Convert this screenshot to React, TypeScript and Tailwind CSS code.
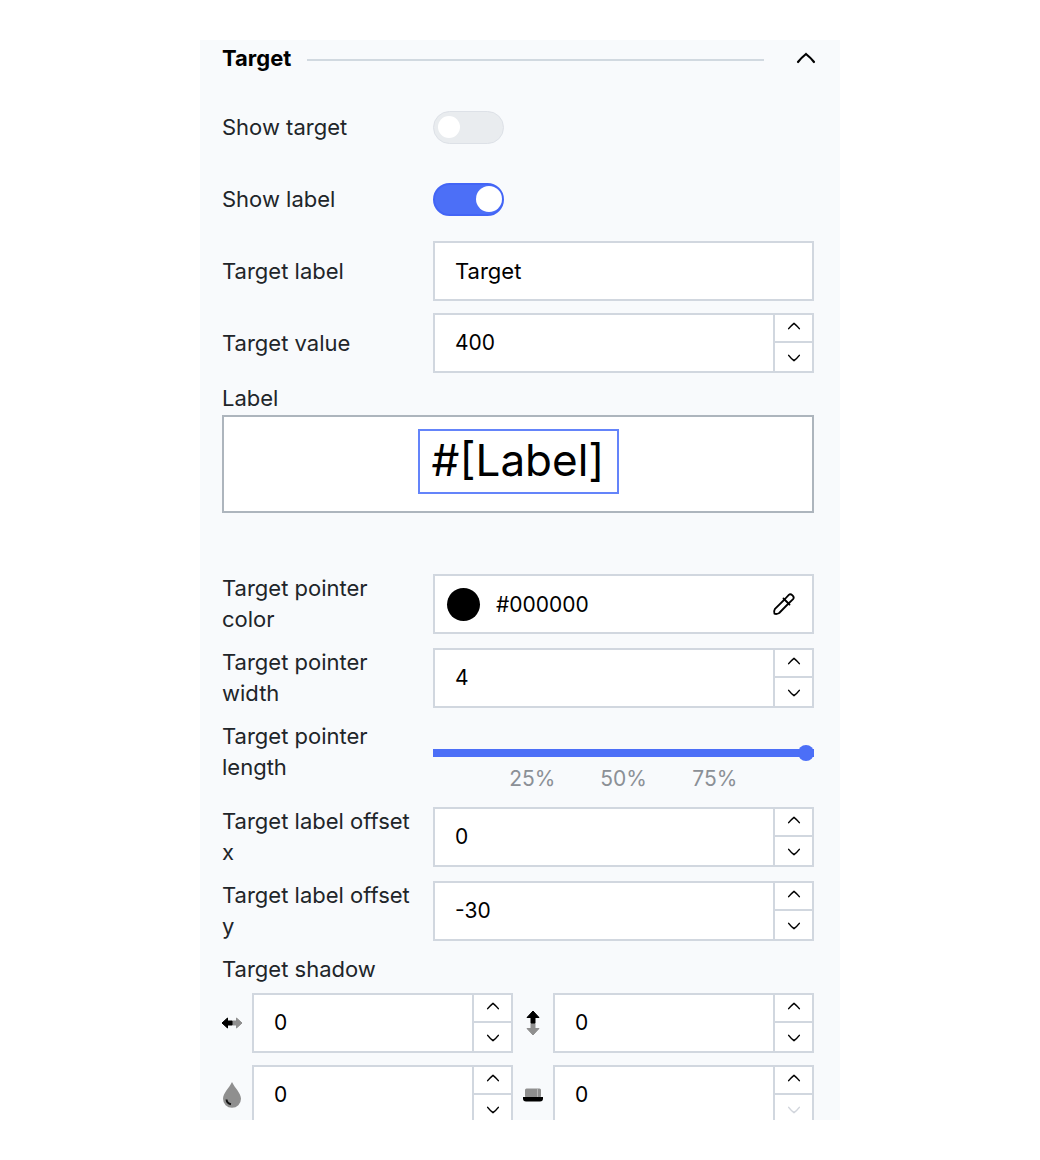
import React, { useId, useState } from 'react';

const ChevronIcon: React.FC<{ className: string; down?: boolean }> = ({ className, down }) => (
  <svg viewBox="0 0 20 12" fill="none" stroke="currentColor" strokeWidth="2.2" strokeLinecap="round" className={className} aria-hidden="true">
    <path d={down ? 'M2 2c2 2.6 5 5.6 8 8 3-2.4 6-5.4 8-8' : 'M2 10c2-2.6 5-5.6 8-8 3 2.4 6 5.4 8 8'} />
  </svg>
);

const OffsetXIcon = () => (
  <svg viewBox="0 0 22 12" strokeLinejoin="round" className="w-[22px] h-3 shrink-0" aria-hidden="true">
    <path d="M21 6l-5.500-5V4H11v4h4.500v3z" fill="#8f8f8f" stroke="#8f8f8f" />
    <path d="M1 6l5.500-5V4H11v4H6.500v3z" fill="#000" stroke="#000" />
  </svg>
);

const OffsetYIcon = () => (
  <svg viewBox="0 0 14 26" strokeLinejoin="round" className="w-3.5 h-[26px]" aria-hidden="true">
    <path d="M7 25l-6-6.500H5V13h4v5.500h4z" fill="#8f8f8f" stroke="#8f8f8f" />
    <path d="M7 1L1 7.500H5V13h4V7.500h4z" fill="#000" stroke="#000" />
  </svg>
);

const BlurIcon = () => (
  <svg viewBox="0 0 20 26" className="w-5 h-[26px]" aria-hidden="true">
    <path d="M10 0C7.500 5.500 1 11 1 16.800a9 9 0 0 0 18 0C19 11 12.500 5.500 10 0z" fill="#8f8f8f" />
    <path d="M4.500 17.500c.3 2.600 1.800 4.200 4.500 4.700" fill="none" stroke="#111" strokeWidth="2" />
  </svg>
);

const SpreadIcon = () => (
  <svg viewBox="0 0 20 14" className="w-5 h-3.5" aria-hidden="true">
    <rect x="2" y="0.5" width="16" height="9" rx="1.5" fill="#8f8f8f" />
    <path d="M14.500 1v8" stroke="#b5b5b5" />
    <path d="M0 9h20v1.500a3 3 0 0 1-3 3H3a3 3 0 0 1-3-3z" fill="#000" />
  </svg>
);

const PickerIcon = () => (
  <svg viewBox="0 0 24 24" fill="none" stroke="currentColor" strokeWidth="1.8" strokeLinejoin="round" strokeLinecap="round" className="w-6 h-6" aria-hidden="true">
    <path d="M12.500 7.500 3 16.800c-1 1.700-1.300 3.400-.6 4.800 1.400.7 3.100.4 4.800-.6l9.300-9.500" />
    <path d="m12.500 7.500 4.300-4.600c2.100-2 6.300 2.100 4.300 4.200l-4.600 4.400" />
    <path d="m11.500 6.500 6 6" />
  </svg>
);

interface FieldProps {
  label: string;
  labelTop?: boolean;
  children: (id: string) => React.ReactNode;
}

const Field: React.FC<FieldProps> = ({ label, labelTop, children }) => {
  const id = useId();
  return (
    <div className="grid grid-cols-[211px_minmax(0,1fr)] items-center min-h-[60px]">
      <label htmlFor={id} className={labelTop ? 'pr-4 self-start' : 'pr-4'}>{label}</label>
      {children(id)}
    </div>
  );
};

interface NumberInputProps {
  id?: string;
  label: string;
  initial: number;
  min?: number;
}

const NumberInput: React.FC<NumberInputProps> = ({ id, label, initial, min }) => {
  const [value, setValue] = useState(String(initial));
  const step = (delta: number) => setValue(String(Number(value) + delta));
  const atMin = min !== undefined && Number(value) <= min;

  return (
    <div className="flex flex-1 min-w-0 h-[60px] bg-white border-2 border-[#d1d7df] text-[21px] text-black">
      <input
        id={id}
        aria-label={id ? undefined : label}
        inputMode="numeric"
        value={value}
        onChange={e => setValue(e.target.value)}
        className="flex-1 min-w-0 px-5 pb-0.5 outline-none"
      />
      <div className="flex flex-col w-[39px] border-l-2 border-[#d1d7df]">
        <button
          type="button"
          aria-label={`Increase ${label}`}
          onClick={() => step(1)}
          className="flex h-7 pb-1 items-center justify-center border-b-2 border-[#d1d7df]"
        >
          <ChevronIcon className="w-3.5 h-2" />
        </button>
        <button
          type="button"
          aria-label={`Decrease ${label}`}
          disabled={atMin}
          onClick={() => step(-1)}
          className="flex flex-1 pt-0.5 items-center justify-center disabled:text-gray-300"
        >
          <ChevronIcon className="w-3.5 h-2" down />
        </button>
      </div>
    </div>
  );
};

const Toggle: React.FC<{ id: string; initial: boolean }> = ({ id, initial }) => {
  const [checked, setChecked] = useState(initial);
  return (
    <input
      id={id}
      type="checkbox"
      role="switch"
      checked={checked}
      onChange={e => setChecked(e.target.checked)}
      className="appearance-none flex items-center w-[71px] h-[33px] px-1 rounded-full border border-[#dde1e7] bg-[#e9ecef] checked:justify-end checked:px-0 checked:border-2 checked:border-[#4365f6] checked:bg-[#4c6ff7] before:block before:size-[22px] before:rounded-full before:bg-white checked:before:size-[26px]"
    />
  );
};

const PercentSlider: React.FC<{ id: string }> = ({ id }) => {
  const [value, setValue] = useState(100);
  return (
    <div className="pt-6">
      <input
        id={id}
        type="range"
        min={0}
        max={100}
        value={value}
        onChange={e => setValue(Number(e.target.value))}
        style={{ backgroundImage: `linear-gradient(to right, #4c6ff7 ${value}%, #d1d7df ${value}%)` }}
        className="appearance-none block w-full h-2 mt-1 mb-1.5 [&::-webkit-slider-thumb]:appearance-none [&::-webkit-slider-thumb]:size-4 [&::-webkit-slider-thumb]:rounded-full [&::-webkit-slider-thumb]:bg-[#4c6ff7]"
      />
      <div className="flex justify-center px-2 text-[21px] leading-[31px] text-[#8b9096] text-center">
        {['25%', '50%', '75%'].map(tick => (
          <span key={tick} className="w-1/4">{tick}</span>
        ))}
      </div>
    </div>
  );
};

const shadowInputs = [
  { label: 'Shadow offset x', icon: OffsetXIcon },
  { label: 'Shadow offset y', icon: OffsetYIcon },
  { label: 'Shadow blur', icon: BlurIcon },
  { label: 'Shadow spread', icon: SpreadIcon, min: 0 }
];

const App: React.FC = () => {
  const [open, setOpen] = useState(true);
  const [targetLabel, setTargetLabel] = useState('Target');
  const [template, setTemplate] = useState('#[Label]');
  const [color, setColor] = useState('#000000');

  return (
    <div className="h-screen py-10 bg-white">
      <section className="h-full max-w-[640px] mx-auto pl-[22px] pr-[26px] overflow-hidden bg-[#f8fafc] font-['Inter',sans-serif] text-[22px] leading-[31px] text-[#212529]">
        <header className="flex items-center h-9">
          <h2 className="font-bold text-black">Target</h2>
          <div className="flex-1 h-0.5 ml-4 mr-6 mt-1 bg-[#d1d9e0]" />
          <button type="button" aria-label="Toggle section" onClick={() => setOpen(!open)} className="w-9 h-9 flex items-center justify-center -mr-2.5 text-black">
            <ChevronIcon className="w-[22px] h-3" />
          </button>
        </header>

        {open && (
          <div className="flex flex-col gap-3 pt-[21px]">
            <Field label="Show target">{id => <Toggle id={id} initial={false} />}</Field>
            <Field label="Show label">{id => <Toggle id={id} initial />}</Field>
            <Field label="Target label">
              {id => (
                <input
                  id={id}
                  value={targetLabel}
                  onChange={e => setTargetLabel(e.target.value)}
                  className="w-full h-[60px] px-5 bg-white border-2 border-[#d1d7df] text-black outline-none"
                />
              )}
            </Field>
            <Field label="Target value">{id => <NumberInput id={id} label="Target value" initial={400} />}</Field>

            <div className="-mt-0.5 mb-12">
              <label htmlFor="template" className="block mb-px">Label</label>
              <div className="flex justify-center items-start h-[98px] pt-3 bg-white border-2 border-[#adb5bd]">
                <input
                  id="template"
                  value={template}
                  onChange={e => setTemplate(e.target.value)}
                  className="w-[201px] h-[65px] pb-1 border-2 border-[#6484fa] text-[44px] text-center text-black outline-none"
                />
              </div>
            </div>

            <Field label="Target pointer color">
              {id => (
                <div className="flex items-center h-[60px] px-3 bg-white border-2 border-[#d1d7df] text-[21px] text-black">
                  <span className="size-[33px] shrink-0 rounded-full" style={{ backgroundColor: color }} />
                  <input
                    id={id}
                    value={color}
                    onChange={e => setColor(e.target.value)}
                    className="flex-1 min-w-0 px-4 outline-none"
                  />
                  <button type="button" aria-label="Pick color" className="mr-1">
                    <PickerIcon />
                  </button>
                </div>
              )}
            </Field>
            <Field label="Target pointer width">{id => <NumberInput id={id} label="Target pointer width" initial={4} />}</Field>
            <Field label="Target pointer length" labelTop>{id => <PercentSlider id={id} />}</Field>
            <Field label="Target label offset x">{id => <NumberInput id={id} label="Target label offset x" initial={0} />}</Field>
            <Field label="Target label offset y">{id => <NumberInput id={id} label="Target label offset y" initial={-30} />}</Field>

            <fieldset>
              <legend className="mb-2">Target shadow</legend>
              <div className="grid grid-cols-2 gap-x-2.5 gap-y-3">
                {shadowInputs.map(item => (
                  <div key={item.label} className="flex items-center gap-2.5">
                    <span className="flex justify-center w-5">
                      <item.icon />
                    </span>
                    <NumberInput label={item.label} initial={0} min={item.min} />
                  </div>
                ))}
              </div>
            </fieldset>
          </div>
        )}
      </section>
    </div>
  );
};

export default App;
